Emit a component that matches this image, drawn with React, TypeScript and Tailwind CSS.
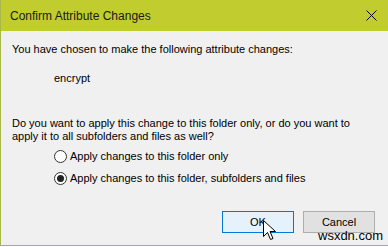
export default function App() {
  return (
    <div className="relative w-[388px] h-[247px] bg-white overflow-hidden font-['Liberation_Sans',Arial,sans-serif] text-black">
      <div className="h-[246px] flex flex-col border-l border-b border-[#a9b64a] bg-[#f0f0f0]">
        <div className="h-[31px] shrink-0 flex items-center justify-between bg-[#c1cd2f] pl-[9px] pr-[11px]">
          <span className="text-[12px] text-[#1a1a1a]">Confirm Attribute Changes</span>
          <svg width="11" height="11" viewBox="0 0 11 11" className="text-black">
            <path d="M0.5 0.5 L10.5 10.5 M10.5 0.5 L0.5 10.5" stroke="currentColor" strokeWidth="1" fill="none" />
          </svg>
        </div>

        <div className="flex flex-col text-[11px] leading-[13px] pl-[11px]">
          <p className="mt-[12px]">You have chosen to make the following attribute changes:</p>
          <p className="mt-[16px] pl-[42px]">encrypt</p>
          <p className="mt-[32px] w-[360px]">
            Do you want to apply this change to this folder only, or do you want to apply it to all subfolders and files as well?
          </p>

          <div className="mt-[7px] pl-[42px] flex flex-col gap-[9px]">
            <label className="flex items-center gap-[3px]">
              <span className="w-[13px] h-[13px] rounded-full border border-[#333] bg-white" />
              <span>Apply changes to this folder only</span>
            </label>
            <label className="flex items-center gap-[3px]">
              <span className="w-[13px] h-[13px] rounded-full border border-[#333] bg-white flex items-center justify-center">
                <span className="w-[7px] h-[7px] rounded-full bg-[#222]" />
              </span>
              <span>Apply changes to this folder, subfolders and files</span>
            </label>
          </div>
        </div>

        <div className="mt-auto mb-[12px] flex justify-end gap-[9px] pr-[13px]">
          <button className="w-[72px] h-[22px] bg-[#e5f1fb] border border-[#0078d7] text-[11px] leading-none">
            OK
          </button>
          <button className="w-[72px] h-[22px] bg-[#e1e1e1] border border-[#adadad] text-[11px] leading-none">
            Cancel
          </button>
        </div>
      </div>

      <svg className="absolute left-[263px] top-[220px]" width="13" height="21" viewBox="0 0 13 21">
        <path
          d="M0.5 0.5 L0.5 16.5 L4.5 12.5 L7.5 19.5 L10 18.5 L7 11.5 L12.5 11.5 Z"
          fill="white"
          stroke="black"
          strokeWidth="1"
          strokeLinejoin="miter"
        />
      </svg>

      <span className="absolute left-[318px] top-[229px] text-[13px] leading-none text-black">wsxdn.com</span>
    </div>
  )
}
